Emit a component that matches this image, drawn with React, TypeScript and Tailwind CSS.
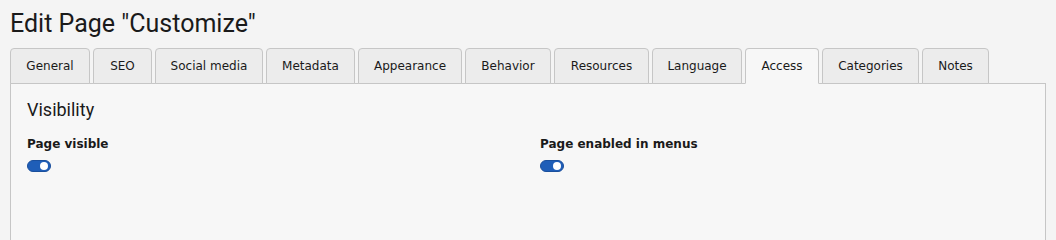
const tabs = [
  { label: 'General', w: 'w-[80px]' },
  { label: 'SEO', w: 'w-[59px]' },
  { label: 'Social media', w: 'w-[108px]' },
  { label: 'Metadata', w: 'w-[89px]' },
  { label: 'Appearance', w: 'w-[104px]' },
  { label: 'Behavior', w: 'w-[86px]' },
  { label: 'Resources', w: 'w-[95px]' },
  { label: 'Language', w: 'w-[90px]' },
  { label: 'Access', w: 'w-[74px]', active: true },
  { label: 'Categories', w: 'w-[97px]' },
  { label: 'Notes', w: 'w-[67px]' },
];

function Toggle() {
  return (
    <span className="mt-2 flex h-[12px] w-[24px] items-center justify-end rounded-full border border-[#1a4f9c] bg-[#1f5eb8] pr-[2px]">
      <span className="h-[8px] w-[8px] rounded-full bg-white" />
    </span>
  );
}

export default function App() {
  return (
    <div className="h-screen overflow-hidden bg-[#f4f4f4] text-[#1a1a1a] font-['DejaVu_Sans',Verdana,sans-serif]">
      <div className="px-[10px]">
        <h1 className="pt-[8px] font-['Roboto',sans-serif] text-[25px] leading-[32px]">
          Edit Page "Customize"
        </h1>

        <div className="mt-[8px] flex gap-[3px]">
          {tabs.map((t) => (
            <div
              key={t.label}
              className={`relative z-10 -mb-px flex h-[36px] items-center justify-center rounded-t-[4px] border border-[#c6c6c6] text-[12px] ${t.w} ${
                t.active ? 'border-b-[#f7f7f7] bg-[#f7f7f7]' : 'bg-[#ececec]'
              }`}
            >
              {t.label}
            </div>
          ))}
        </div>

        <div className="border border-[#c6c6c6] bg-[#f7f7f7] px-4 pt-[14px] pb-[80px]">
          <h2 className="font-['Roboto',sans-serif] text-[18px] leading-[24px]">Visibility</h2>
          <div className="mt-[14px] grid grid-cols-2 gap-6">
            <div className="flex flex-col items-start">
              <span className="text-[12px] font-bold leading-[16px]">Page visible</span>
              <Toggle />
            </div>
            <div className="flex flex-col items-start">
              <span className="text-[12px] font-bold leading-[16px]">Page enabled in menus</span>
              <Toggle />
            </div>
          </div>
        </div>
      </div>
    </div>
  );
}
